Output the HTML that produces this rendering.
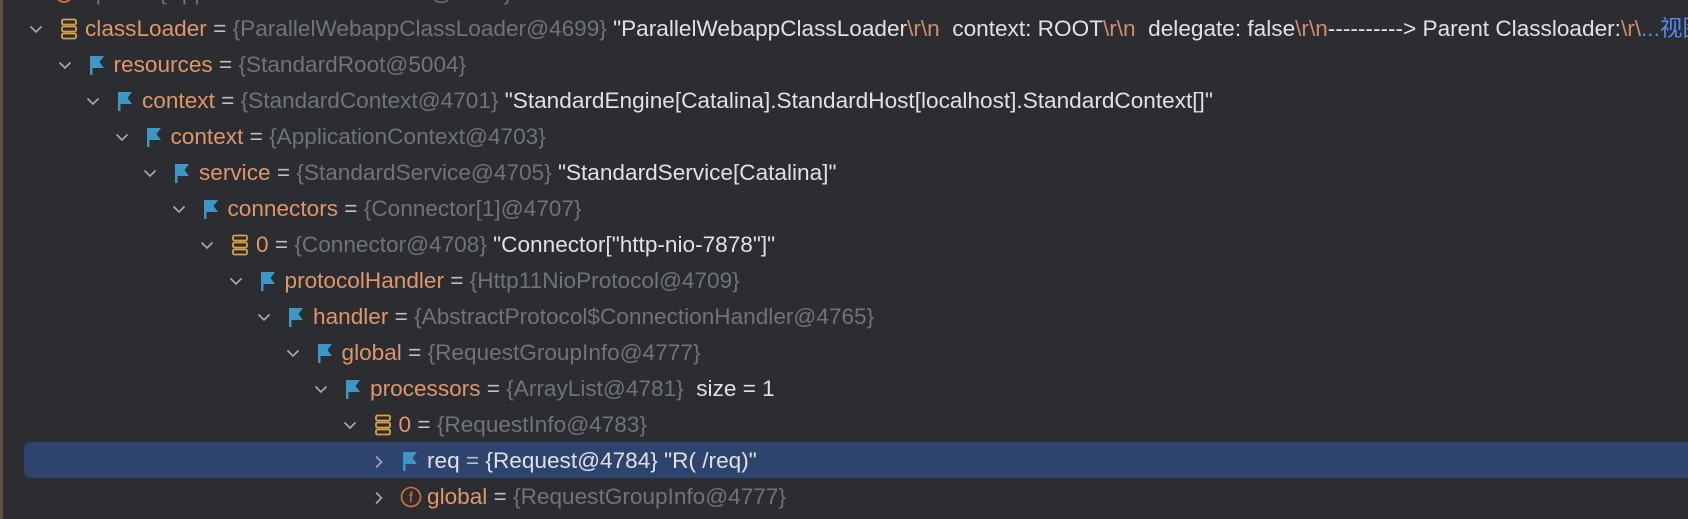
<!DOCTYPE html>
<html><head><meta charset="utf-8"><style>
html,body{margin:0;padding:0;}
body{width:1688px;height:519px;background:#2b2d30;position:relative;overflow:hidden;font-family:"Liberation Sans","Noto Sans CJK SC",sans-serif;font-size:22.6px;}
.strip{position:absolute;left:0;top:0;width:3px;height:519px;background:#5e5345;}
.row{position:absolute;left:0;right:0;height:36px;line-height:36px;white-space:nowrap;}
.sel{position:absolute;left:24px;right:0;top:442px;height:36px;background:#2e436e;border-radius:6px 0 0 6px;}
.chev{position:absolute;top:12px;}
.ic{position:absolute;top:9px;}
.t{position:absolute;top:0;}
.n{color:#e0956b;}
.eq{color:#bcbec4;}
.ty{color:#6f737a;}
.v{color:#dfe1e5;}
.esc{color:#cf8e6d;}
.lnk{color:#548af7;}
</style></head><body>
<div class="strip"></div>
<div class="sel"></div>

<div class="row" style="top:-25px">
<svg class="ic" style="left:54px" width="20" height="20"><circle cx="10" cy="10" r="8" fill="none" stroke="#d9743c" stroke-width="1.8"/></svg>
<span class="t ty" style="left:82px">r\ped = {ApplicationContextFacade@4700}</span>
</div>

<div id="rows"></div>
<script>
const rows=[
[0,'s','classLoader','{ParallelWebappClassLoader@4699}','<span class="v">"ParallelWebappClassLoader</span><span class="esc">\\r\\n</span><span class="v">&nbsp; context: ROOT</span><span class="esc">\\r\\n</span><span class="v">&nbsp; delegate: false</span><span class="esc">\\r\\n</span><span class="v">----------&gt; Parent Classloader:</span><span class="esc">\\r\\</span><span class="lnk">...视图</span>',1],
[1,'f','resources','{StandardRoot@5004}','',1],
[2,'f','context','{StandardContext@4701}','<span class="v">"StandardEngine[Catalina].StandardHost[localhost].StandardContext[]"</span>',1],
[3,'f','context','{ApplicationContext@4703}','',1],
[4,'f','service','{StandardService@4705}','<span class="v">"StandardService[Catalina]"</span>',1],
[5,'f','connectors','{Connector[1]@4707}','',1],
[6,'s','0','{Connector@4708}','<span class="v">"Connector["http-nio-7878"]"</span>',1],
[7,'f','protocolHandler','{Http11NioProtocol@4709}','',1],
[8,'f','handler','{AbstractProtocol$ConnectionHandler@4765}','',1],
[9,'f','global','{RequestGroupInfo@4777}','',1],
[10,'f','processors','{ArrayList@4781}','<span class="v">&nbsp;size = 1</span>',1],
[11,'s','0','{RequestInfo@4783}','',1],
[12,'f','req','{Request@4784}','<span class="v">"R( /req)"</span>',0,1],
[12,'o','global','{RequestGroupInfo@4777}','',0]
];
let h='';
rows.forEach((r,i)=>{
 const [lv,ic,name,ty,val,open,sel]=r;
 const cx=36+lv*28.5, top=11+i*36;
 let chev=open?`<svg class="chev" style="left:${cx-7}px" width="14" height="12"><path d="M1.5 3.5 L7 9 L12.5 3.5" fill="none" stroke="#a8abb0" stroke-width="1.6"/></svg>`
 :`<svg class="chev" style="left:${cx-5}px" width="12" height="14"><path d="M3 1.5 L8.5 7 L3 12.5" fill="none" stroke="#a8abb0" stroke-width="1.6"/></svg>`;
 let il=cx+24, icon='';
 if(ic=='s') icon=`<svg class="ic" style="left:${il}px;top:7px" width="18" height="22"><g fill="none" stroke="#d9a343" stroke-width="1.8"><rect x="2" y="1.5" width="14" height="5" rx="1.5"/><rect x="2" y="8.5" width="14" height="5" rx="1.5"/><rect x="2" y="15.5" width="14" height="5" rx="1.5"/></g></svg>`;
 else if(ic=='f') icon=`<svg class="ic" style="left:${il}px;top:8px" width="17" height="21"><path d="M1 1 H15 L10.5 7 L15 13 H3.5 V20 H1 Z" fill="#3d96c6"/></svg>`;
 else icon=`<svg class="ic" style="left:${il-2}px;top:7px" width="22" height="22"><circle cx="11" cy="11" r="9.5" fill="none" stroke="#d9743c" stroke-width="1.6"/><text x="11" y="16.5" text-anchor="middle" font-family="Liberation Sans" font-size="15" fill="#d9743c">f</text></svg>`;
 const nc=sel?'v':'n', tc=sel?'v':'ty';
 h+=`<div class="row" style="top:${top}px">${chev}${icon}<span class="t" style="left:${cx+49}px"><span class="${nc}">${name}</span><span class="eq"> = </span><span class="${tc}">${ty}</span> ${val}</span></div>`;
});
document.getElementById('rows').innerHTML=h;
</script>
</body></html>
